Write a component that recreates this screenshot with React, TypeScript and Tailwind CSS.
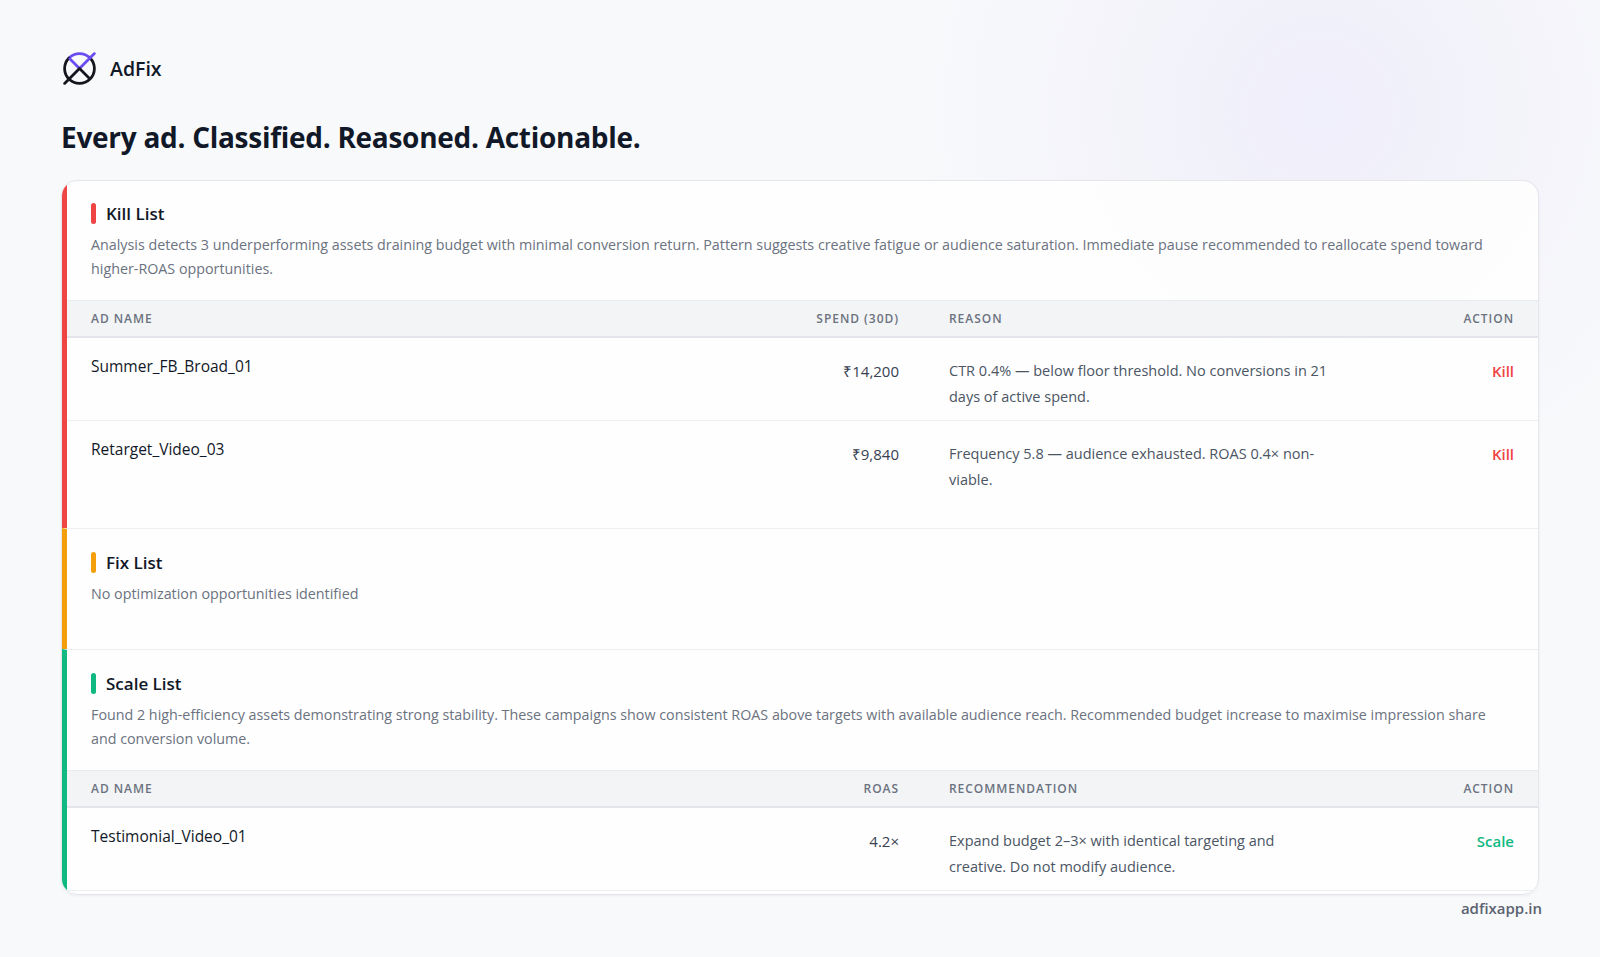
import React from "react"

type Row = {
  name: string
  value: string
  reason: string
  action: string
}

const killRows: Row[] = [
  {
    name: "Summer_FB_Broad_01",
    value: "₹14,200",
    reason: "CTR 0.4% — below floor threshold. No conversions in 21 days of active spend.",
    action: "Kill",
  },
  {
    name: "Retarget_Video_03",
    value: "₹9,840",
    reason: "Frequency 5.8 — audience exhausted. ROAS 0.4× non-viable.",
    action: "Kill",
  },
]

const scaleRows: Row[] = [
  {
    name: "Testimonial_Video_01",
    value: "4.2×",
    reason: "Expand budget 2–3× with identical targeting and creative. Do not modify audience.",
    action: "Scale",
  },
]

const Logo = () => (
  <svg width="37" height="37" viewBox="0 0 36 36" fill="none" strokeLinecap="round">
    {/* ring */}
    <path d="M7.75 7.75 A14.5 14.5 0 0 1 28.25 7.75" stroke="#6a4cf0" strokeWidth="2.7" />
    <path d="M28.25 7.75 A14.5 14.5 0 1 1 7.75 7.75" stroke="#16161f" strokeWidth="2.7" />
    {/* cross */}
    <path d="M8.5 8.5 L18 18 M18 18 L32.5 3.5" stroke="#6a4cf0" strokeWidth="2.7" />
    <path d="M18 18 L3.5 32.5 M18 18 L27.5 27.5" stroke="#16161f" strokeWidth="2.7" />
  </svg>
)

const SectionTitle = ({ bar, title }: { bar: string; title: string }) => (
  <div className="flex items-center gap-[10px] h-[21px]">
    <span className={`w-[5px] h-[21px] rounded-full ${bar}`} />
    <p className="text-[17px] leading-[21px] font-semibold text-[#111827]">{title}</p>
  </div>
)

const TableHead = ({ cols }: { cols: string[] }) => (
  <div className="grid grid-cols-[1fr_160px_465px_150px] items-center h-[38px] px-6 bg-[#f3f4f6] border-t border-[#e8eaee] border-b-2 border-b-[#e3e5ea] text-[12px] font-semibold tracking-[0.08em] text-[#6b7280] uppercase">
    <span>{cols[0]}</span>
    <span className="text-right">{cols[1]}</span>
    <span className="pl-[50px]">{cols[2]}</span>
    <span className="text-right">{cols[3]}</span>
  </div>
)

const TableRow = ({ row, actionColor, reasonWidth, last }: { row: Row; actionColor: string; reasonWidth: string; last?: boolean }) => (
  <div className={`grid grid-cols-[1fr_160px_465px_150px] items-start px-6 pt-4 pb-[10px] ${last ? "" : "border-b border-[#eceef1]"}`}>
    <span className="text-[15.5px] leading-[24px] font-medium text-[#111827]">{row.name}</span>
    <span className="mt-[4px] text-right text-[15px] leading-[26px] font-medium text-[#374151]">{row.value}</span>
    <div className="pl-[50px] mt-[4px]">
      <p className={`${reasonWidth} text-[14.5px] leading-[26px] text-[#4b5563]`}>{row.reason}</p>
    </div>
    <span className={`mt-[4px] text-right text-[15px] leading-[26px] font-semibold ${actionColor}`}>{row.action}</span>
  </div>
)

export default function App() {
  return (
    <div className="w-full h-[957px] overflow-hidden bg-[#f8f9fb] bg-[radial-gradient(circle_at_1320px_110px,#efeefb_0px,#f3f3fa_180px,#f8f9fb_400px)] font-['Open_Sans',sans-serif] px-[61px] pt-[50px]">
      {/* BRAND */}
      <div className="flex items-center gap-3">
        <Logo />
        <span className="text-[19.5px] font-semibold text-[#111827]">AdFix</span>
      </div>

      <h1 className="mt-[33px] text-[28px] leading-[34px] font-bold text-[#111827] tracking-[-0.01em]">
        Every ad. Classified. Reasoned. Actionable.
      </h1>

      {/* RESULTS CARD */}
      <div className="mt-[26px] h-[715px] overflow-hidden rounded-[16px] border border-[#e4e6eb] bg-white/85 shadow-[0_1px_3px_rgba(16,24,40,0.05)]">
        {/* KILL */}
        <div className="border-l-[5px] border-l-[#ef4444] pt-[22px] pb-[25px]">
          <div className="px-6">
            <SectionTitle bar="bg-[#ef4444]" title="Kill List" />
            <p className="mt-[9px] mb-[19px] max-w-[1412px] text-[14.3px] leading-[24px] text-[#6b7280]">
              Analysis detects 3 underperforming assets draining budget with minimal conversion return. Pattern suggests creative fatigue or audience saturation. Immediate pause recommended to reallocate spend toward higher-ROAS opportunities.
            </p>
          </div>
          <TableHead cols={["Ad Name", "Spend (30D)", "Reason", "Action"]} />
          {killRows.map((r, i) => (
            <TableRow key={r.name} row={r} actionColor="text-[#ef4444]" reasonWidth="max-w-[400px]" last={i === killRows.length - 1} />
          ))}
        </div>

        {/* FIX */}
        <div className="border-t border-[#eceef1] border-l-[5px] border-l-[#f59e0b] pt-[23px] pb-[43px] px-6">
          <SectionTitle bar="bg-[#f59e0b]" title="Fix List" />
          <p className="mt-[9px] text-[14.3px] leading-[24px] text-[#6b7280]">No optimization opportunities identified</p>
        </div>

        {/* SCALE */}
        <div className="h-full border-t border-[#eceef1] border-l-[5px] border-l-[#10b981] pt-[23px]">
          <div className="px-6">
            <SectionTitle bar="bg-[#10b981]" title="Scale List" />
            <p className="mt-[9px] mb-[19px] max-w-[1412px] text-[14.3px] leading-[24px] text-[#6b7280]">
              Found 2 high-efficiency assets demonstrating strong stability. These campaigns show consistent ROAS above targets with available audience reach. Recommended budget increase to maximise impression share and conversion volume.
            </p>
          </div>
          <TableHead cols={["Ad Name", "ROAS", "Recommendation", "Action"]} />
          {scaleRows.map((r) => (
            <TableRow key={r.name} row={r} actionColor="text-[#10b981]" reasonWidth="max-w-[370px]" />
          ))}
        </div>
      </div>

      <div className="flex justify-end -mr-[3px] mt-[2px]">
        <span className="text-[15px] font-semibold text-[#5b6270]">adfixapp.in</span>
      </div>
    </div>
  )
}
